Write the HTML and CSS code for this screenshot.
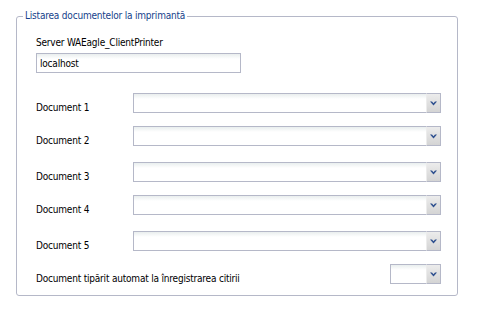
FILE: index.html
```html
<!DOCTYPE html>
<html lang="ro">

<head>
    <meta charset="UTF-8">
    <meta name="viewport" content="width=device-width, initial-scale=1.0">
    <title>Listarea documentelor la imprimantă</title>
    <link rel="stylesheet" href="styles.css">
</head>

<body>
    <fieldset class="group">
        <legend>Listarea documentelor la imprimantă</legend>

        <label class="field-label" for="server">Server WAEagle_ClientPrinter</label>
        <input class="text" type="text" id="server" value="localhost">

        <div class="rows">
            <div class="row">
                <span class="row-label">Document 1</span>
                <div class="combo">
                    <input class="combo-text" type="text" readonly>
                    <span class="trigger"><svg width="7" height="5" viewBox="0 0 7 5"><path d="M0 0.5h2l1.5 1.8 1.5-1.8h2l-3.5 4z"/></svg></span>
                </div>
            </div>
            <div class="row">
                <span class="row-label">Document 2</span>
                <div class="combo">
                    <input class="combo-text" type="text" readonly>
                    <span class="trigger"><svg width="7" height="5" viewBox="0 0 7 5"><path d="M0 0.5h2l1.5 1.8 1.5-1.8h2l-3.5 4z"/></svg></span>
                </div>
            </div>
            <div class="row wide">
                <span class="row-label">Document 3</span>
                <div class="combo">
                    <input class="combo-text" type="text" readonly>
                    <span class="trigger"><svg width="7" height="5" viewBox="0 0 7 5"><path d="M0 0.5h2l1.5 1.8 1.5-1.8h2l-3.5 4z"/></svg></span>
                </div>
            </div>
            <div class="row">
                <span class="row-label">Document 4</span>
                <div class="combo">
                    <input class="combo-text" type="text" readonly>
                    <span class="trigger"><svg width="7" height="5" viewBox="0 0 7 5"><path d="M0 0.5h2l1.5 1.8 1.5-1.8h2l-3.5 4z"/></svg></span>
                </div>
            </div>
            <div class="row wide">
                <span class="row-label">Document 5</span>
                <div class="combo">
                    <input class="combo-text" type="text" readonly>
                    <span class="trigger"><svg width="7" height="5" viewBox="0 0 7 5"><path d="M0 0.5h2l1.5 1.8 1.5-1.8h2l-3.5 4z"/></svg></span>
                </div>
            </div>
            <div class="row split">
                <span class="row-label long">Document tipărit automat la înregistrarea citirii</span>
                <div class="combo small">
                    <input class="combo-text" type="text" readonly>
                    <span class="trigger"><svg width="7" height="5" viewBox="0 0 7 5"><path d="M0 0.5h2l1.5 1.8 1.5-1.8h2l-3.5 4z"/></svg></span>
                </div>
            </div>
        </div>
    </fieldset>
</body>

</html>
```

FILE: styles.css
```css
body {
    margin: 0;
    font-family: "DejaVu Sans Condensed", "DejaVu Sans", sans-serif;
    font-size: 10px;
    letter-spacing: -0.2px;
    color: #000;
    background-color: #fff;
}

.group {
    box-sizing: border-box;
    width: 442px;
    margin: 10px 0 0 16px;
    padding: 15px 16px 11px 19px;
    border: 1px solid #b5b8c8;
    border-radius: 3px;
}

.group legend {
    margin-left: -13px;
    padding: 0 2px;
    line-height: 12px;
    color: #15428b;
}

.field-label {
    display: block;
    line-height: 12px;
    margin-bottom: 4px;
}

.text,
.combo-text {
    box-sizing: border-box;
    height: 20px;
    margin: 0;
    padding: 0 3px;
    border: 1px solid #b5b8c8;
    font: inherit;
    letter-spacing: inherit;
    color: #000;
    background: #fff linear-gradient(#e9eeee, #fff 5px);
    outline: none;
}

.text {
    display: block;
    width: 205px;
}

.rows {
    margin-top: 20px;
}

.row {
    display: flex;
    align-items: flex-start;
    height: 20px;
}

.row + .row {
    margin-top: 13px;
}

.row.wide {
    margin-top: 16px;
}

.row.split {
    justify-content: space-between;
}

.row-label {
    width: 97px;
    padding-top: 9px;
    line-height: 12px;
}

.row-label.long {
    width: auto;
}

.combo {
    display: flex;
    width: 308px;
    height: 20px;
}

.combo.small {
    width: 51px;
}

.combo-text {
    flex: 1;
    min-width: 0;
    border-right: 0;
}

.trigger {
    box-sizing: border-box;
    width: 15px;
    height: 20px;
    display: flex;
    align-items: center;
    justify-content: center;
    border: 1px solid #b5b8c8;
    border-left: 1px solid #ececec;
    background: linear-gradient(#ececec, #d4d4d4);
}

.trigger svg {
    fill: #2d4f8e;
}
```
